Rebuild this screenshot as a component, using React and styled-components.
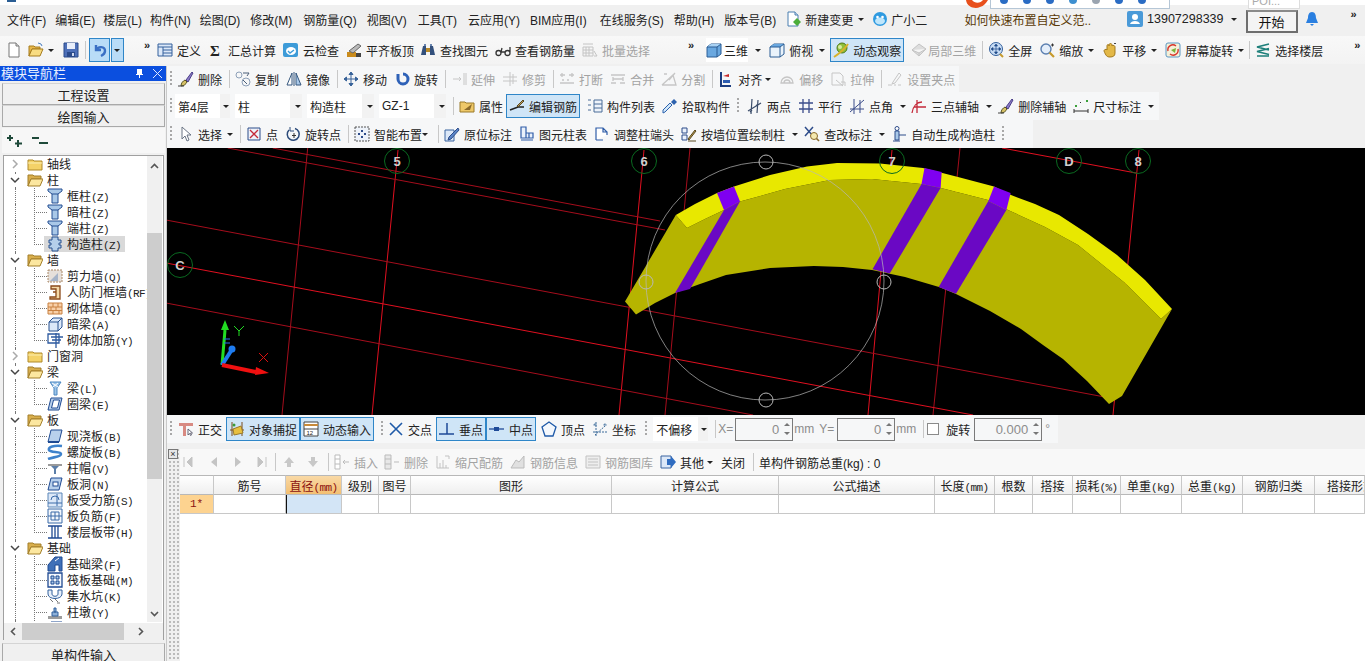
import styled, { createGlobalStyle } from "styled-components";

const GlobalStyle = createGlobalStyle`
  html, body {
    margin: 0;
    height: 100%;
    overflow: hidden;
    background: #f0f0f0;
  }
  * { box-sizing: border-box; }
`;

const UI_FONT = `"Liberation Sans", "Noto Sans CJK SC", sans-serif`;
const TREE_FONT = `"Noto Sans CJK SC", sans-serif`;

const icons = {
  new: <><path d="M3 1h7l3 3v11H3z" fill="#fff" stroke="#777" /><path d="M10 1v3h3" fill="#ddd" stroke="#777" /></>,
  change: <><path d="M2 1h7l3 3v11H2z" fill="#fff" stroke="#4a7fb0" /><path d="M9 1v3h3" fill="#cfe0f0" stroke="#4a7fb0" /><path d="M11 7l4 4-4 4-4-4z" fill="#4cae3a" /></>,
  robot: <><circle cx="8" cy="8" r="7" fill="#2f9ae0" /><ellipse cx="8" cy="10" rx="5" ry="3.500" fill="#bfe6fb" /><circle cx="5.500" cy="6" r="1.300" fill="#fff" /><circle cx="10.500" cy="6" r="1.300" fill="#fff" /></>,
  user: <><rect x="0" y="0" width="16" height="16" rx="2" fill="#4a9ad8" /><circle cx="8" cy="6" r="3" fill="#fff" /><path d="M3 13c1-4 9-4 10 0z" fill="#fff" /></>,
  open: <><path d="M1 4h5l1 1h5v2H4L1 14z" fill="#e8b84a" stroke="#a67c1e" /><path d="M4 7h11l-3 7H1z" fill="#f8dc82" stroke="#a67c1e" /><path d="M10 1l3 1 1 2" fill="none" stroke="#4a7fc0" /></>,
  save: <><path d="M1 1h14v14H1z" fill="#4d6fb8" stroke="#2b4a8a" /><path d="M4 1h8v6H4z" fill="#e8eefa" /><path d="M4 10h8v5H4z" fill="#2b4a8a" /><path d="M9 11h2v3H9z" fill="#cfd8ee" /></>,
  undo: <path d="M4 3v5h5M4 8c2-4 9-4 9 1 0 3-2 4-4 5" fill="none" stroke="#3a6fc4" strokeWidth="2.4" />,
  define: <><path d="M1 2h14v12H1z" fill="#dce8f8" stroke="#34609c" /><path d="M1 5h14M6 5v9M6 8h9M6 11h9" stroke="#34609c" /></>,
  sigma: <text x="2" y="14" fontSize="15" fontWeight="700" fontFamily="Liberation Serif, serif" fill="#222">Σ</text>,
  cloud: <><rect x="0" y="1" width="15" height="14" rx="2" fill="#3d9bd8" /><ellipse cx="8" cy="9" rx="5" ry="4" fill="#fff" /><path d="M5 9l2 2 4-3" fill="none" stroke="#3d9bd8" strokeWidth="1.4" /></>,
  level: <><path d="M1 10h9v5H1z" fill="#c98b1c" /><path d="M3 9l9-7 3 2-8 7z" fill="#b9b9b9" stroke="#666" /><path d="M10 11h5v4h-5z" fill="#444" /></>,
  binoc: <><path d="M1 13l2-9h3v9zM10 13V4h3l2 9z" fill="#33507c" /><path d="M6 6h4v4H6z" fill="#b88a2a" /><path d="M4 2h2v2H4zM10 2h2v2h-2z" fill="#6a86b0" /></>,
  glasses: <path d="M1 11a2.500 2.500 0 1 0 5 0 2.500 2.500 0 1 0-5 0M6 10l1-4M10 11a2.500 2.500 0 1 0 5 0 2.500 2.500 0 1 0-5 0M15 10V5M6 10h4" fill="none" stroke="#333" strokeWidth="1.300" />,
  batch: <path d="M1 2h10M1 5h10v9H1zM4 5v9M7 5v9M1 8h10M1 11h10M12 9l3 5h-3" fill="none" stroke="#c4c4c4" />,
  cube: <><path d="M1 5l4-3h10v10l-4 3H1z" fill="#6aa8e0" stroke="#2a5d94" /><path d="M1 5l4-3h10l-4 3z" fill="#a9d2f4" /><path d="M1 5h10v10M11 5l4-3" fill="none" stroke="#2a5d94" /></>,
  cubeTop: <><path d="M1 5l4-3h10v10l-4 3H1z" fill="#eaf3fb" stroke="#2a5d94" /><path d="M5 2h10l-4 3H1z" fill="#6aa8e0" /><path d="M1 5h10v10M11 5l4-3" fill="none" stroke="#2a5d94" /></>,
  orbit: <><circle cx="9" cy="6" r="5" fill="#8fbf3a" stroke="#4f7a1a" /><path d="M1 15C4 13 11 8 15 2" fill="none" stroke="#d9b22a" strokeWidth="2" /><circle cx="7" cy="5" r="2" fill="#d8eca0" /></>,
  local3d: <path d="M1 8l7-6 7 5-7 7z M1 8l7 3 7-4M8 11v3" fill="#ddd" stroke="#c4c4c4" />,
  full: <><circle cx="8" cy="7" r="6.500" fill="#c8dcf4" stroke="#33609c" /><path d="M8 3v8M4 7h8M8 2L6.500 4h3zM8 12l-1.500-2h3zM3 7l2-1.500v3zM13 7l-2-1.500v3z" fill="#1f4a8a" stroke="#1f4a8a" strokeWidth=".7" /><path d="M12 12l3 3" stroke="#c79a2c" strokeWidth="2" /></>,
  zoom: <><circle cx="7" cy="7" r="5" fill="#e4eefa" stroke="#5b7fb0" strokeWidth="1.400" /><path d="M10.500 10.500L15 15" stroke="#c79a2c" strokeWidth="2.200" /><path d="M12 3h3M13.500 1.500v3" stroke="#333" /></>,
  pan: <><path d="M2 9c0-2 3-2 3-1V4c0-2 2-2 2 0V3c0-2 3-2 3 0v1c0-1 3-1 3 1v6c0 3-2 4-5 4-3 0-4-1-6-6z" fill="#e3b847" stroke="#a37a1f" /><path d="M12 1l1 1 1-1" stroke="#444" fill="none" /></>,
  screen: <><rect x="1" y="1" width="14" height="14" rx="2" fill="#f5f0d8" stroke="#5a97c4" /><path d="M3 9a5 5 0 0 1 8-5" fill="none" stroke="#d8332a" strokeWidth="1.400" /><path d="M13 7a5 5 0 0 1-8 5" fill="none" stroke="#d8332a" strokeWidth="1.400" /><path d="M6 8l5-2-1 5z" fill="#7cb33a" /></>,
  layers: <path d="M14 2L2 5l12 3M14 6.500L2 9.500l12 3M2 14h12" fill="none" stroke="#1d7f7a" strokeWidth="1.600" />,
  brush: <><path d="M3 15c0-3 2-5 4-6l2 2c-1 2-3 4-6 4z" fill="#d8c266" stroke="#55511f" /><path d="M8 9l6-8 1 1-5 9z" fill="#8c7cc8" stroke="#4b3f88" /><path d="M0 15h6" stroke="#444" /></>,
  copy: <><circle cx="4" cy="4" r="3" fill="none" stroke="#8da0b8" /><circle cx="11" cy="11" r="4" fill="none" stroke="#8da0b8" /><path d="M8 2h6l-2 3M8 9l4 4" fill="none" stroke="#4a5e78" /></>,
  mirror: <><path d="M6 2v12H1z" fill="#fff" stroke="#35577e" /><path d="M10 2v12h5z" fill="#a9c8e8" stroke="#35577e" /><path d="M8 1v14" stroke="#35577e" /></>,
  move: <path d="M8 1v14M1 8h14M8 1L6 3.500h4zM8 15l-2-2.500h4zM1 8l2.500-2v4zM15 8l-2.500-2v4z" fill="#38639a" stroke="#38639a" />,
  rotate: <path d="M4 3v5a5 5 0 1 0 5-5" fill="none" stroke="#2f62b8" strokeWidth="3" />,
  extend: <path d="M2 8h8M13 2v12M15 2v12M8 6l2 2-2 2" fill="none" stroke="#c6c6c6" />,
  trim: <path d="M1 6h14M1 10h14M8 1v14M11 3v10" fill="none" stroke="#c6c6c6" />,
  breakIt: <path d="M1 4h5M10 4h5M1 12h14M3 2v4M13 2v4M3 9h2M8 9h2" fill="none" stroke="#c6c6c6" strokeWidth="1.300" />,
  merge: <path d="M1 4h14M1 12h5M10 12h5M3 8h10M3 6v4M13 6v4" fill="none" stroke="#c6c6c6" strokeWidth="1.300" />,
  split: <path d="M1 14h14L12 4 1 14M8 9l6-7M3 3h3" fill="none" stroke="#c6c6c6" strokeWidth="1.300" />,
  align: <><path d="M3 1v14h10" fill="none" stroke="#1c3d80" strokeWidth="2" /><path d="M5 5l6-2v3z" fill="#c82a2a" /><path d="M5 9h7v3H5z" fill="#2d5cb0" /></>,
  offset: <path d="M2 12a6 6 0 1 1 12 0zM5 12a3 3 0 1 1 6 0" fill="none" stroke="#c6c6c6" strokeWidth="1.300" />,
  stretch: <path d="M2 2h8l3 3v9H2zM6 9l7 6M11 11h4v4" fill="none" stroke="#c6c6c6" />,
  grips: <path d="M1 14h4M7 14h2M11 14h3M12 2L6 11l-1 2 3-1 6-8z" fill="none" stroke="#c6c6c6" />,
  prop: <><path d="M1 4h5l1 1h8v9H1z" fill="#eec869" stroke="#9a7a2a" /><path d="M5 12l8-6-2 6z" fill="#8a6a2a" /></>,
  editBar: <><path d="M1 12l8-3 6 0" fill="none" stroke="#222" strokeWidth="1.500" /><path d="M8 8l6-6 1 1-6 6z" fill="#b89a5c" stroke="#5a4a22" /></>,
  list: <path d="M1 2h3M1 7h3M1 12h3M7 2h8v12H7zM7 6h8M7 10h8" fill="#eef3fa" stroke="#4a6c98" />,
  pick: <><path d="M1 15l2-1 7-7-2-2-7 7z" fill="#d2e8fa" stroke="#2d62ae" /><path d="M9 4l3-3 3 3-3 3z" fill="#2d62ae" /></>,
  two: <path d="M1 13L14 5M5 1l-1 15M11 2l-1 13M3 14l2-2M9 8l2-2" fill="none" stroke="#3a4c6a" strokeWidth="1.200" />,
  parallel: <path d="M5 1v14M11 1v14M1 5h14M1 11h14" fill="none" stroke="#3a4c8a" strokeWidth="1.300" />,
  angle: <path d="M1 14L15 2M5 1v15M11 2v13M1 11h14" fill="none" stroke="#3a4c8a" />,
  three: <path d="M1 15C2 8 6 4 11 4M6 2v13M3 9h12" fill="none" stroke="#c42a3a" strokeWidth="1.300" />,
  dim: <><path d="M1 11v4M15 11v4M1 13h14" stroke="#333" fill="none" /><path d="M2 7h2v2H2zM13 2h2v2h-2z" fill="#3aa03a" /><path d="M7 4l1 1" stroke="#333" /></>,
  cursor: <path d="M4 1v12l3-3 2 5 2-1-2-5h4z" fill="#fff" stroke="#6a7484" />,
  point: <><path d="M2 2h12v12H2z" fill="#eef3fa" stroke="#2d4c8a" /><path d="M4 4l8 8M12 4l-8 8" stroke="#c42a3a" strokeWidth="1.300" /></>,
  rotPoint: <><path d="M4 4a6 6 0 1 0 6-1.500" fill="none" stroke="#2b4a7a" strokeWidth="1.500" /><path d="M5 1v4h4" fill="none" stroke="#2b4a7a" /><path d="M9 7v5M7 9.500h4" stroke="#333" /></>,
  smart: <><path d="M1 1h14v14H1z" fill="#eef3fa" stroke="#555" strokeDasharray="2 1" /><path d="M7 4h2v2H7zM4 7h2v2H4zM10 7h2v2h-2zM7 10h2v2H7z" fill="#2d4c8a" /></>,
  origin: <><path d="M1 4h9v11H1z" fill="#dce8f8" stroke="#3a64a0" /><path d="M5 11l9-9 1 2-8 9-3 1z" fill="#5b86c8" stroke="#2d4c8a" /></>,
  colTable: <path d="M2 1h5v11H2zM2 14h12M7 7h7v5H7zM10 7v5" fill="#eaf1fb" stroke="#2f5da8" strokeWidth="1.200" />,
  adjust: <path d="M2 14V2h7l4 4v3M2 14h7M9 2v4h4" fill="#fff" stroke="#2f5da8" strokeWidth="1.200" />,
  wallCol: <><path d="M1 2h5v5H1zM1 9h5v5H1z" fill="#eaf1fb" stroke="#2d4c8a" /><path d="M7 13l7-9 1 1-7 9zM7 15h8" fill="#b89a4c" stroke="#5a4a22" /></>,
  check: <><path d="M1 1l8 9M9 1L1 10" stroke="#2d4c8a" strokeWidth="1.500" /><circle cx="10" cy="10" r="3.500" fill="#f5e9b0" stroke="#8a6a2a" /><path d="M12.500 12.500L15 15" stroke="#8a6a2a" strokeWidth="1.600" /></>,
  auto: <><circle cx="6" cy="2.500" r="2" fill="#fff" stroke="#2d4c8a" /><path d="M4 5h4v9H4z" fill="#a9c8e8" stroke="#2d4c8a" /><path d="M2 15h7M8 9h7" stroke="#2d4c8a" /></>,
  ortho: <><path d="M1 2h14v3H1z" fill="#d88a82" /><path d="M5 5v10h3V5z" fill="#d88a82" /><path d="M10 8v6l1.500-1.500 1 2 1-.5-1-2h2z" fill="#fff" stroke="#667" /></>,
  snap: <><path d="M1 9h14M3 1v14M13 1v14" stroke="#7a4a1a" /><path d="M4 8l8-3 2 7-9 2z" fill="#e8c040" stroke="#9a7a2a" /><circle cx="5" cy="4" r="1.500" fill="#3a9a3a" /></>,
  dyn: <><path d="M1 1h14v14H1z" fill="#fff" stroke="#444" /><path d="M1 4h14" stroke="#c88a3a" strokeWidth="2" /><path d="M1 8h14" stroke="#444" /><text x="3.500" y="14" fontSize="6" fontFamily="Liberation Sans" fill="#222">12</text></>,
  cross: <path d="M2 2l12 12M14 2L2 14" fill="none" stroke="#1f5aa8" strokeWidth="1.600" />,
  perp: <path d="M0 13h15M8 2v11" stroke="#1f4a98" strokeWidth="1.500" />,
  mid: <><path d="M0 8h15" stroke="#1f4a98" strokeWidth="1.300" /><rect x="5" y="6" width="5" height="4" fill="#1f4a98" /></>,
  vertex: <path d="M8 1l7 5-3 9H4L1 6z" fill="#f4f8fd" stroke="#1f5aa8" strokeWidth="1.300" />,
  coord: <path d="M4 1v14M1 11h14M3 3a1 1 0 1 0 .1 0M13 3a1 1 0 1 0 .1 0M3 14l10-9" fill="none" stroke="#3a6a9a" strokeDasharray="2 1" />,
  first: <path d="M4 3v10M12 3v10L7 8z" fill="#c4c4c4" stroke="#c4c4c4" />,
  prev: <path d="M11 3v10L5 8z" fill="#c4c4c4" />,
  next: <path d="M5 3v10l6-5z" fill="#c4c4c4" />,
  last: <path d="M12 3v10M4 3v10l5-5z" fill="#c4c4c4" stroke="#c4c4c4" />,
  up: <path d="M8 3l5 6h-3v4H6V9H3z" fill="#c8c8c8" />,
  down: <path d="M8 13l5-6h-3V3H6v4H3z" fill="#c8c8c8" />,
  ins: <path d="M1 1h5v14H1zM1 5h5M1 10h5M9 8h6M11 6l-2 2 2 2" fill="#fff" stroke="#bbb" />,
  del: <path d="M1 1h6v14H1V1zM1 5h6M1 10h6M10 8h5" fill="#e8e8e8" stroke="#bbb" />,
  scale: <path d="M2 2v12h12M5 14V9M8 14V6M11 14v-3M10 2h4v3" fill="none" stroke="#c2c2c2" />,
  info: <path d="M1 14l5-8 3 2 5-6v12H1z" fill="#e0e0e0" stroke="#bbb" />,
  lib: <path d="M1 2h14v12H1zM3 5h10M3 8h10M3 11h10" fill="#eee" stroke="#c2c2c2" />,
  other: <><path d="M1 2h10v12H1z" fill="#dce8f8" stroke="#3a64a0" /><path d="M7 5h4V2l5 6-5 6v-3H7z" fill="#2f6cc0" /></>,
  folder: <><path d="M1 4h5l1 1h8v9H1z" fill="#f4d268" stroke="#b08a2a" /><path d="M1 7h14" stroke="#fbeeb0" /></>,
  folderOpen: <><path d="M1 3h5l1 1h7v3H4l-3 7z" fill="#d8ae4c" stroke="#a37f2a" /><path d="M4 7h12l-3 7H1z" fill="#fce7a0" stroke="#a37f2a" /></>,
  col: <><path d="M1 1h14v2l-4 3v9H5V6L1 3z" fill="#a9c8e8" stroke="#254f92" /><path d="M5 6h6" stroke="#254f92" /></>,
  conCol: <path d="M5 1h6v3h3v3h-2v2h2v3h-3v3H5v-3H2V9h2V7H2V4h3z" fill="#b5cfea" stroke="#27508f" />,
  shear: <><path d="M1 2h14v12H1z" fill="#e6e0da" stroke="#aa8866" strokeDasharray="2 1" /><path d="M3 13l8-8v8z" fill="#a6b4c8" /></>,
  door: <path d="M4 2h9v13H3v-2h6V5H4zM6 8h3" fill="#f4d9a8" stroke="#8a4a1a" strokeWidth="1.300" />,
  brick: <><path d="M1 3h14v11H1z" fill="#f8d0a8" stroke="#c88040" /><path d="M1 7h14M1 10.500h14M6 3v4M11 3v4M4 7v3.500M9 7v3.500M6 10.500V14M12 10.500V14" stroke="#c88040" /></>,
  beamH: <><path d="M2 6l4-4h9v9l-4 4H2z" fill="#dce8f8" stroke="#27508f" /><path d="M2 6h9v9M11 6l4-4" fill="none" stroke="#27508f" /></>,
  rebar: <path d="M1 2h11v9H1zM4 5h12M9 1v15M5 8h9" fill="none" stroke="#2d5aa0" strokeWidth="1.300" />,
  beam: <><path d="M3 2h11l-4 6v7H7V8z" fill="#9cc4e8" stroke="#4a86c0" /><path d="M5 3l6 4M11 3L6 7" stroke="#fff" /></>,
  ring: <path d="M1 14l3-12h11l-3 12zM4.500 12l2-8h6l-2 8z" fill="#b8d0ec" stroke="#1f4a92" fillRule="evenodd" />,
  slab: <><path d="M1 14l3-12h11l-3 12z" fill="#b8d0ec" stroke="#1f4a92" /><path d="M1 14h11" stroke="#1f4a92" strokeWidth="2" /></>,
  spiral: <path d="M15 2C7 1 1 3 2 6c1 3 12 1 12 4 0 3-8 3-13 5" fill="none" stroke="#3e82cc" strokeWidth="2.600" />,
  cap: <><path d="M1 4h14v2H1z" fill="#9a9a9a" /><path d="M4 6h8L9 9H7zM7 9h2v5H7z" fill="#5c7ea8" /></>,
  hole: <><path d="M1 14l3-12h11l-3 12z" fill="#b8d0ec" stroke="#1f4a92" /><rect x="6" y="6" width="5" height="4" fill="#fff" stroke="#1f4a92" /></>,
  sRebar: <><path d="M1 1h14v14H1z" fill="#dce8f8" stroke="#5a86b8" /><path d="M1 11h14M10 2v12M4 8a4 4 0 0 1 8 0" fill="none" stroke="#3a6aa8" /></>,
  nRebar: <><path d="M1 1h14v14H1z" fill="#f3f7fc" stroke="#3a6aa8" /><path d="M4 4h8v8H4zM1 8h14M8 4v8" fill="none" stroke="#3a6aa8" /></>,
  band: <path d="M1 2h14M1 14h14M5 2v12M11 2v12M8 2v12" fill="none" stroke="#1f4a92" strokeWidth="1.300" />,
  fBeam: <><path d="M1 15V9l7-8h7v14h-3V9H8v6z" fill="#3f70b8" stroke="#1f4a92" /><path d="M8 5l4-3" stroke="#fff" /></>,
  raft: <><path d="M1 1h14v14H1z" fill="#f3f7fc" stroke="#1f4a92" strokeWidth="1.300" /><path d="M4 4h3v3H4zM9 4h3v3H9zM4 9h3v3H4zM9 9h3v3H9z" fill="#a9c8e8" stroke="#1f4a92" /></>,
  pit: <><path d="M1 2h4v4c0 3 6 3 6 0V2h4v4c0 6-14 6-14 0z" fill="#e8f0fa" stroke="#33609c" /><path d="M3 11l3 3M8 11l3 3M10 15h3" stroke="#777" /></>,
  pier: <><path d="M1 12h14v3H1z" fill="#9c9c9c" /><path d="M5 8h6v4H5zM7 4h2v4H7z" fill="#8db0d8" stroke="#33609c" /></>,
};

const IconBox = styled.svg`
  width: 16px;
  height: 16px;
  flex: none;
  display: block;
`;

const Icon = ({ name }) => <IconBox viewBox="0 0 16 16">{icons[name]}</IconBox>;

const Page = styled.div`
  width: 1365px;
  height: 661px;
  overflow: hidden;
  position: relative;
  background: #f0f0f0;
  font-family: ${UI_FONT};
  font-size: 12px;
  color: #222;
`;

const TopStrip = styled.div`
  height: 5px;
  background: #fff;
`;

const AppMark = styled.div`
  position: absolute;
  left: 7px;
  top: 0;
  width: 9px;
  height: 2px;
  background: #2a5d94;
`;

const Swoosh = styled.svg`
  position: absolute;
  left: 965px;
  top: 0;
  width: 26px;
  height: 9px;
`;

const FloatBar = styled.div`
  position: absolute;
  left: 990px;
  top: 0;
  width: 180px;
  height: 9px;
  background: #fff;
  border: 1px solid #b5c6d6;
  border-top: none;
  display: flex;
  gap: 15px;
  padding-left: 9px;
`;

const FloatDot = styled.span`
  width: 8px;
  height: 4px;
  border-radius: 0 0 4px 4px;
  background: ${(p) => p.$c};
`;

const PoiBox = styled.div`
  position: absolute;
  left: 1248px;
  top: 0;
  width: 52px;
  height: 9px;
  background: #fff;
  border: 1px solid #ddd;
  border-top: none;
  color: #aaa;
  font-size: 11px;
  line-height: 3px;
  padding-left: 3px;
`;

const MenuBar = styled.div`
  height: 31px;
  padding: 0 0 3px 7px;
  display: flex;
  align-items: center;
  white-space: nowrap;
`;

const MenuItem = styled.span`
  margin-left: ${(p) => p.$ml ?? 10}px;
  font-size: ${(p) => p.$size ?? 12}px;
  color: ${(p) => p.$color ?? "#222"};
  flex: none;
  display: inline-flex;
  align-items: center;
  gap: 3px;
  &:first-child { margin-left: 0; }
`;

const StartButton = styled.button`
  width: 52px;
  height: 23px;
  margin-left: 8px;
  margin-top: 5px;
  padding: 0;
  flex: none;
  border: 2px solid #6e6e6e;
  border-top-color: #8a8a8a;
  background: #f4f4f4;
  font: 13px ${UI_FONT};
  color: #111;
`;

const Row = styled.div`
  height: ${(p) => p.$h}px;
  width: ${(p) => (p.$full ? "100%" : "fit-content")};
  display: flex;
  align-items: center;
  gap: 7px;
  padding: 0 ${(p) => p.$pr ?? 4}px 0 ${(p) => p.$pl ?? 3}px;
  background: ${(p) => p.$bg ?? "#f6f7f8"};
  white-space: nowrap;
  flex: none;
`;

const ToolWrap = styled.span`
  display: inline-flex;
  align-items: center;
  gap: ${(p) => p.$gap ?? 4}px;
  height: 24px;
  flex: none;
  margin-left: ${(p) => p.$ml ?? 0}px;
  padding: ${(p) => (p.$on ? "0 2px" : "0")};
  color: ${(p) => (p.$off ? "#a3a3a3" : "#222")};
  background: ${(p) => (p.$on ? "#cfe5f7" : p.$white ? "#fff" : "transparent")};
  border: ${(p) => (p.$on ? "1px solid #2f86c8" : "none")};
`;

const CaretMark = styled.span`
  width: 6px;
  height: 3px;
  flex: none;
  margin-left: ${(p) => p.$ml ?? 0}px;
  margin-right: 1px;
  border-left: 3px solid transparent;
  border-right: 3px solid transparent;
  border-top: 3px solid #222;
`;

const Sep = styled.span`
  width: 1px;
  height: 18px;
  flex: none;
  margin-left: ${(p) => p.$ml ?? 0}px;
  margin-right: -2px;
  background: #c8c8c8;
`;

const Grip = styled.span`
  width: 3px;
  height: 16px;
  flex: none;
  margin-left: ${(p) => p.$ml ?? 0}px;
  background: linear-gradient(#a8a8a8 50%, transparent 50%) 0 0 / 2px 4px repeat-y;
`;

const More = styled.span`
  width: 8px;
  height: 24px;
  flex: none;
  margin-left: ${(p) => p.$ml ?? 0}px;
  font: 700 11px/14px "Liberation Sans", sans-serif;
  color: #222;
`;

const UndoCaret = styled.span`
  width: 13px;
  height: 24px;
  flex: none;
  margin-left: ${(p) => p.$ml ?? 0}px;
  display: flex;
  align-items: center;
  justify-content: center;
  background: #b9dcf7;
  border: 1px solid #2f86c8;
`;

const UndoButton = styled(UndoCaret)`
  width: 21px;
`;

const SelectBox = styled.span`
  width: ${(p) => p.$w}px;
  height: 24px;
  flex: none;
  margin-left: ${(p) => p.$ml ?? 0}px;
  display: inline-flex;
  align-items: center;
  justify-content: space-between;
  padding: 0 0 0 3px;
  background: linear-gradient(90deg, #fff 82%, #f2f2f2 82%);
`;

const Items = ({ list }) =>
  list.map((it, i) => {
    if (it.sep) return <Sep key={i} $ml={it.ml} />;
    if (it.grip) return <Grip key={i} $ml={it.ml} />;
    if (it.caret) return <CaretMark key={i} $ml={it.ml} />;
    if (it.more) return <More key={i} $ml={it.ml}>»</More>;
    if (it.sel)
      return (
        <SelectBox key={i} $w={it.w} $ml={it.ml}>
          {it.sel}
          <CaretMark />
        </SelectBox>
      );
    if (it.undo)
      return (
        <UndoButton key={i} $ml={it.ml}>
          <Icon name="undo" />
        </UndoButton>
      );
    if (it.undoCaret)
      return (
        <UndoCaret key={i} $ml={it.ml}>
          <CaretMark />
        </UndoCaret>
      );
    return (
      <ToolWrap key={i} $ml={it.ml} $off={it.off} $on={it.on} $gap={it.gap} $white={it.white}>
        {it.i && <Icon name={it.i} />}
        {it.t}
      </ToolWrap>
    );
  });

const caret = (ml) => ({ caret: 1, ml });
const sep = (ml) => ({ sep: 1, ml });
const grip = (ml) => ({ grip: 1, ml });

const quickBar = [
  { i: "new" }, { i: "open", ml: -1 }, caret(-3), { i: "save", ml: 1 }, sep(-1),
  { undo: 1, ml: -2 }, { undoCaret: 1, ml: -6 }, { more: 1, ml: 13 },
  { i: "define", t: "定义", ml: -2 }, { i: "sigma", t: "汇总计算" }, { i: "cloud", t: "云检查" },
  { i: "level", t: "平齐板顶" }, { i: "binoc", t: "查找图元", ml: -1 }, { i: "glasses", t: "查看钢筋量" },
  { i: "batch", t: "批量选择", off: 1 }, { more: 1, ml: 31 },
  { i: "cube", t: "三维", gap: 2, white: 1, ml: 3 }, caret(), { i: "cubeTop", t: "俯视" }, caret(-1),
  { i: "orbit", t: "动态观察", on: 1, ml: -3 }, { i: "local3d", t: "局部三维", off: 1, gap: 1 }, sep(-1),
  { i: "full", t: "全屏" }, { i: "zoom", t: "缩放" }, caret(-2), { i: "pan", t: "平移" }, caret(-2),
  { i: "screen", t: "屏幕旋转" }, caret(-2), sep(-3), { i: "layers", t: "选择楼层" }, { more: 1, ml: 24 },
];

const editBar = [
  grip(), { i: "brush", t: "删除", ml: -2 }, sep(), { i: "copy", t: "复制" }, { i: "mirror", t: "镜像" }, sep(),
  { i: "move", t: "移动" }, { i: "rotate", t: "旋转" }, sep(), { i: "extend", t: "延伸", off: 1 },
  { i: "trim", t: "修剪", off: 1 }, sep(), { i: "breakIt", t: "打断", off: 1 }, { i: "merge", t: "合并", off: 1 },
  { i: "split", t: "分割", off: 1 }, sep(), { i: "align", t: "对齐" }, caret(-4), { i: "offset", t: "偏移", off: 1 },
  { i: "stretch", t: "拉伸", off: 1 }, sep(), { i: "grips", t: "设置夹点", off: 1 },
];

const compBar = [
  grip(), { sel: "第4层", w: 55, ml: -5 }, { sel: "柱", w: 67, ml: -2 }, { sel: "构造柱", w: 67, ml: -2 },
  { sel: "GZ-1", w: 67, ml: -2 }, sep(), { i: "prop", t: "属性" }, { i: "editBar", t: "编辑钢筋", on: 1, ml: -4 },
  { i: "list", t: "构件列表" }, { i: "pick", t: "拾取构件" }, grip(), { i: "two", t: "两点" },
  { i: "parallel", t: "平行" }, { i: "angle", t: "点角" }, caret(), { i: "three", t: "三点辅轴", ml: -3 }, caret(),
  { i: "brush", t: "删除辅轴", ml: -2 }, { i: "dim", t: "尺寸标注" }, caret(),
];

const drawBar = [
  grip(), { i: "cursor", t: "选择", ml: -2 }, caret(-2), sep(-1), { i: "point", t: "点" }, { i: "rotPoint", t: "旋转点" },
  sep(), { i: "smart", t: "智能布置" }, caret(-7), sep(2), { i: "origin", t: "原位标注" }, { i: "colTable", t: "图元柱表" },
  { i: "adjust", t: "调整柱端头" }, { i: "wallCol", t: "按墙位置绘制柱" }, caret(), { i: "check", t: "查改标注", ml: -2 },
  caret(), { i: "auto", t: "自动生成构造柱", ml: -2 }, grip(),
];

const snapBar = [
  grip(), { i: "ortho", t: "正交", ml: -2 }, { i: "snap", t: "对象捕捉", on: 1, ml: -3 }, { i: "dyn", t: "动态输入", on: 1, ml: -7 },
  grip(), { i: "cross", t: "交点", ml: -3 }, { i: "perp", t: "垂点", on: 1, ml: -3 }, { i: "mid", t: "中点", on: 1, ml: -7 },
  { i: "vertex", t: "顶点", ml: -2 }, { i: "coord", t: "坐标" }, grip(2), { sel: "不偏移", w: 55, ml: -2 }, sep(),
];

const rebarBar = [
  { i: "first", ml: 0 }, { i: "prev", ml: 3 }, { i: "next", ml: 1 }, { i: "last", ml: 1 }, sep(-2), { i: "up" }, { i: "down", ml: 1 }, sep(),
  { i: "ins", t: "插入", off: 1 }, { i: "del", t: "删除", off: 1, ml: -1 }, { i: "scale", t: "缩尺配筋", off: 1 },
  { i: "info", t: "钢筋信息", off: 1 }, { i: "lib", t: "钢筋图库", off: 1 }, { i: "other", t: "其他" }, caret(-4),
  { t: "关闭" }, sep(1), { t: "单构件钢筋总重(kg) : 0" },
];

const Muted = styled.span`
  color: #8c8c8c;
  flex: none;
  margin-left: ${(p) => p.$ml ?? 0}px;
`;

const SpinBox = styled.span`
  width: ${(p) => p.$w}px;
  height: 23px;
  flex: none;
  margin-left: ${(p) => p.$ml ?? 0}px;
  border: 1px solid #7a7a7a;
  display: flex;
  align-items: center;
  justify-content: flex-end;
  gap: 5px;
  padding-right: 2px;
  color: #8c8c8c;
  background: #f6f7f8;
  font-size: 13px;
`;

const SpinArrows = styled.span`
  display: flex;
  flex-direction: column;
  gap: 6px;
  &::before, &::after {
    content: "";
    width: 0;
    border-left: 3px solid transparent;
    border-right: 3px solid transparent;
  }
  &::before { border-bottom: 3px solid #777; }
  &::after { border-top: 3px solid #777; }
`;

const Check = styled.span`
  width: 12px;
  height: 12px;
  flex: none;
  margin-left: -2px;
  border: 1px solid #8a8a8a;
  background: #fff;
`;

const Body = styled.div`
  display: flex;
  height: 595px;
  margin-top: 2px;
`;

const LeftPanel = styled.aside`
  width: 167px;
  flex: none;
  display: flex;
  flex-direction: column;
  overflow: hidden;
  border-right: 1px solid #c9c9c9;
`;

const NavTitle = styled.div`
  height: 15px;
  flex: none;
  background: #0b4fdf;
  color: #e8efff;
  font-size: 13px;
  line-height: 14px;
  padding-left: 1px;
  display: flex;
  align-items: center;
  justify-content: space-between;
  padding-right: 4px;
`;

const TitleIcons = styled.span`
  display: flex;
  gap: 9px;
  align-items: center;
  font-size: 12px;
`;

const PanelButton = styled.div`
  height: 22px;
  flex: none;
  margin: ${(p) => p.$mt ?? 0}px 1px 0 2px;
  padding-top: 1px;
  border: 1px solid #a9a9a9;
  border-top-color: #d4d4d4;
  background: #f0f0f0;
  font: 13px/19px ${TREE_FONT};
  text-align: center;
`;

const TreeTools = styled.div`
  height: 25px;
  flex: none;
  margin: 1px 1px 0 2px;
  background: #f7f7f7;
  display: flex;
  align-items: center;
  gap: 8px;
  padding-left: 5px;
`;

const TreeBox = styled.div`
  height: 485px;
  flex: none;
  margin: 2px 2px 0 3px;
  border: 1px solid #a0a0a0;
  background: #fff;
  display: flex;
  flex-direction: column;
`;

const TreeMain = styled.div`
  height: 466px;
  flex: none;
  display: flex;
`;

const TreeList = styled.div`
  width: 143px;
  overflow: hidden;
  flex: none;
`;

const TreeRow = styled.div`
  height: 16px;
  position: relative;
  display: flex;
  align-items: center;
  white-space: nowrap;
  font: 12px/16px ${TREE_FONT};
  color: #222;
  &::before {
    content: "";
    position: absolute;
    left: 11px;
    top: 0;
    bottom: 0;
    border-left: 1px dotted #777;
  }
`;

const GroupRow = styled(TreeRow)`
  gap: 4px;
  &::before { display: ${(p) => (p.$first ? "none" : "block")}; }
`;

const ChildRow = styled(TreeRow)`
  padding-left: 40px;
  background: ${(p) =>
    p.$last ? "none" : "linear-gradient(#777 50%, transparent 50%) 30px 0 / 1px 2px repeat-y"};
  &::after {
    content: "";
    position: absolute;
    left: 30px;
    top: 0;
    width: 12px;
    height: 8px;
    border-left: 1px dotted #777;
    border-bottom: 1px dotted #777;
  }
`;

const ChildBody = styled.span`
  display: flex;
  align-items: center;
  gap: 4px;
  position: relative;
  z-index: 1;
  padding: 0 ${(p) => (p.$sel ? 4 : 0)}px 0 3px;
  background: ${(p) => (p.$sel ? "#d9d9d9" : "transparent")};
`;

const Chevron = styled.svg`
  width: 12px;
  height: 12px;
  margin-left: 5px;
  flex: none;
  position: relative;
  z-index: 1;
  background: #fff;
`;

const FolderGap = styled.span`
  margin-left: 2px;
  display: flex;
`;

const KeyHint = styled.span`
  font: 11px "Liberation Mono", monospace;
  letter-spacing: -0.6px;
`;

const VScroll = styled.div`
  width: 15px;
  flex: none;
  background: #f0f0f0;
  display: flex;
  flex-direction: column;
  align-items: center;
  justify-content: space-between;
  padding: 6px 0 4px;
  position: relative;
`;

const VThumb = styled.div`
  position: absolute;
  left: 0;
  right: 0;
  top: 77px;
  height: 246px;
  background: #cdcdcd;
`;

const HScroll = styled.div`
  height: 17px;
  flex: none;
  margin-top: 1px;
  background: #f0f0f0;
  display: flex;
  align-items: center;
  justify-content: space-between;
  padding: 0 18px 0 5px;
  position: relative;
`;

const HThumb = styled.div`
  position: absolute;
  left: 18px;
  top: 0;
  bottom: 0;
  width: 102px;
  background: #cdcdcd;
`;

const ArrowMark = styled.svg`
  width: 9px;
  height: 9px;
  position: relative;
`;

const Arrow = ({ d }) => (
  <ArrowMark viewBox="0 0 9 9">
    <path d={d} fill="none" stroke="#555" strokeWidth="1.600" />
  </ArrowMark>
);

const RightPanel = styled.main`
  flex: 1;
  min-width: 0;
  display: flex;
  flex-direction: column;
`;

const CanvasSvg = styled.svg`
  display: block;
  width: 1198px;
  height: 267px;
  flex: none;
  background: #000;
`;

const Lower = styled.div`
  margin-top: 6px;
  flex: 1;
  display: flex;
  min-height: 0;
`;

const DockGrip = styled.div`
  width: 13px;
  flex: none;
  background:
    radial-gradient(#bbb 1px, transparent 1.200px) 1px 11px / 4px 4px repeat;
  position: relative;
`;

const DockClose = styled.span`
  position: absolute;
  left: 1px;
  top: 0;
  width: 10px;
  height: 10px;
  background: #e6e6e6;
  border: 1px solid #777;
  font: 9px/8px "Liberation Sans", sans-serif;
  text-align: center;
  color: #333;
`;

const Sheet = styled.div`
  flex: 1;
  min-width: 0;
  background: #fff;
`;

const TableGrid = styled.div`
  display: grid;
  grid-template-columns: 34px 72px 56px 37px 32px 201px 167px 156px 60px 38px 40px 48px 61px 61px 72px 50px;
  width: 1185px;
  overflow: hidden;
`;

const HeadCell = styled.div`
  height: 20px;
  border-top: 1px solid #b8b8b8;
  border-right: 1px solid #c8c8c8;
  border-bottom: 1px solid #b8b8b8;
  background: ${(p) => (p.$sel ? "linear-gradient(#f9d9a6, #f3bf72)" : "linear-gradient(#fff, #efefef)")};
  color: ${(p) => (p.$sel ? "#8a1010" : "#222")};
  font: 12px/19px ${TREE_FONT};
  text-align: ${(p) => (p.$pl ? "left" : "center")};
  white-space: nowrap;
  overflow: hidden;
  padding-left: ${(p) => p.$pl ?? 0}px;
`;

const RowHead = styled.div`
  height: 19px;
  background: #fdd390;
  border-bottom: 1px solid #c8c8c8;
  border-right: 1px solid #c8c8c8;
  color: #8a1010;
  font: 11px/18px "Liberation Mono", monospace;
  text-align: center;
`;

const DataCell = styled.div`
  height: 19px;
  border-bottom: 1px solid #c8c8c8;
  border-right: 1px solid #c8c8c8;
  background: ${(p) => (p.$sel ? "#d3e5f6" : "#fff")};
  border-left: ${(p) => (p.$sel ? "1px solid #111" : "none")};
`;

const menus = [
  ["文件(F)"], ["编辑(E)", 9], ["楼层(L)", 8], ["构件(N)", 8], ["绘图(D)", 9], ["修改(M)", 10], ["钢筋量(Q)", 11],
  ["视图(V)", 10], ["工具(T)", 11], ["云应用(Y)", 11], ["BIM应用(I)", 10], ["在线服务(S)", 13], ["帮助(H)", 10], ["版本号(B)", 10],
];

const columns = [
  ["筋号"], ["直径", "(mm)", 1], ["级别"], ["图号"], ["图形"], ["计算公式"], ["公式描述"], ["长度", "(mm)"],
  ["根数"], ["搭接"], ["损耗", "(%)"], ["单重", "(kg)"], ["总重", "(kg)"], ["钢筋归类"],
];

const tree = [
  { name: "轴线", closed: 1 },
  { name: "柱", items: [["col", "框柱", "(Z)"], ["col", "暗柱", "(Z)"], ["col", "端柱", "(Z)"], ["conCol", "构造柱", "(Z)", 1]] },
  { name: "墙", items: [["shear", "剪力墙", "(Q)"], ["door", "人防门框墙", "(RF)"], ["brick", "砌体墙", "(Q)"], ["beamH", "暗梁", "(A)"], ["rebar", "砌体加筋", "(Y)"]] },
  { name: "门窗洞", closed: 1 },
  { name: "梁", items: [["beam", "梁", "(L)"], ["ring", "圈梁", "(E)"]] },
  { name: "板", items: [["slab", "现浇板", "(B)"], ["spiral", "螺旋板", "(B)"], ["cap", "柱帽", "(V)"], ["hole", "板洞", "(N)"], ["sRebar", "板受力筋", "(S)"], ["nRebar", "板负筋", "(F)"], ["band", "楼层板带", "(H)"]] },
  { name: "基础", items: [["fBeam", "基础梁", "(F)"], ["raft", "筏板基础", "(M)"], ["pit", "集水坑", "(K)"], ["pier", "柱墩", "(Y)"], ["slab", "独立基础", "(D)"]] },
];

const NavTree = () =>
  tree.map((g, gi) => (
    <div key={g.name}>
      <GroupRow $first={gi === 0}>
        <Chevron viewBox="0 0 12 12">
          <path d={g.closed ? "M4 2l4 4-4 4" : "M2 4l4 4 4-4"} fill="none" stroke={g.closed ? "#aaa" : "#444"} strokeWidth="1.500" />
        </Chevron>
        <FolderGap><Icon name={g.closed ? "folder" : "folderOpen"} /></FolderGap>
        {g.name}
      </GroupRow>
      {g.items?.map(([ic, label, key, sel], i) => (
        <ChildRow key={label} $last={i === g.items.length - 1}>
          <ChildBody $sel={sel}>
            <Icon name={ic} />
            <span>{label}<KeyHint>{key}</KeyHint></span>
          </ChildBody>
        </ChildRow>
      ))}
    </div>
  ));

const Axis = styled.g`
  font: 700 13px "Liberation Sans", sans-serif;
`;

const gridLines = [
  [307.7, 148, 282, 415, 0], [398, 150, 372, 415, 1], [690, 148, 665, 415, 0], [644, 150, 619, 415, 1],
  [960, 148, 933, 415, 0], [892, 150, 868, 415, 1], [1139, 150, 1113, 415, 1],
  [272.7, 148, 660, 221, 0], [227.7, 148, 665, 230, 0], [1002, 148, 1136, 173, 1],
  [166, 220, 1110, 398, 0], [166, 263, 973, 415, 1], [166, 303, 753, 415, 0],
];

const axisMarks = [[397, 161, "5"], [644, 161, "6"], [892, 161, "7"], [1069, 161, "D"], [1138, 161, "8"], [180, 265, "C"]];

const bandInner = "687,228 705,219 724,210 740,201.600 785,189 830,180 872,179 921,184 941,188 988,200 1008,210 1045,227 1078,245 1125,283 1161,319";
const bandOuter = "1172,309 1145,280 1117,255 1088,234 1059,215 1035,204 1011,195 994,186.500 958,177 923,168 880,163.500 837,163 807,166.500 770,175 734,186.500 717,193 695,204 675.800,215";
const archInner = "1109,404 1087,381 1063,359 1043,345 1021,329 990,311 956,294 939,287 905,277 872,270 843,267 814,266 770,268 726,275 700,284 675,293 655,303 636,314.500 625,301.500";

const DrawingCanvas = () => (
  <CanvasSvg viewBox="167 148 1198 267">
    {gridLines.map(([a, b, c, d, hot], i) => (
      <line key={i} x1={a} y1={b} x2={c} y2={d} stroke={hot ? "#e01020" : "#a50d1c"} />
    ))}
    <polygon fill="#b6b400" points={`675.800,215 ${bandInner} 1172,309 1122,396 ${archInner}`} />
    <polygon fill="#e8e800" points={`${bandOuter} ${bandInner}`} />
    <polygon fill="#7f00f0" points="717,193 734,186.500 740,201.600 724,210" />
    <polygon fill="#6a08c4" points="724,210 740,201.600 690,289 675,293" />
    <polygon fill="#7f00f0" points="924.500,168 941.700,172 940.600,188 921.500,184" />
    <polygon fill="#6a08c4" points="921.500,184 940.600,188 889.700,273.600 872.500,269.300" />
    <polygon fill="#7f00f0" points="994,186.500 1010.600,193 1006.400,210 988.400,201" />
    <polygon fill="#6a08c4" points="988.400,201 1006.400,210 956,293.700 938.700,287" />
    <circle cx="765" cy="281" r="119" fill="none" stroke="#b8b8b8" strokeOpacity=".7" />
    {[[766, 162], [766, 400], [646, 282], [884, 282]].map(([x, y]) => (
      <circle key={x + y} cx={x} cy={y} r="7" fill="none" stroke="#b8b8b8" />
    ))}
    <Axis>
      {axisMarks.map(([x, y, t]) => (
        <g key={t}>
          <circle cx={x} cy={y} r="12.500" fill="none" stroke="#0a6a20" />
          <text x={x} y={y + 5} textAnchor="middle" fill="#cfcfcf">{t}</text>
        </g>
      ))}
    </Axis>
    <path d="M222 365L225 330" stroke="#22dd22" strokeWidth="3" />
    <path d="M225 320l4 10h-8z" fill="#22dd22" />
    <path d="M222 365l9-14" stroke="#1e7cf0" strokeWidth="4" />
    <circle cx="232" cy="349" r="3.500" fill="#1e7cf0" />
    <path d="M222 365l34 7" stroke="#f01010" strokeWidth="4" />
    <path d="M256 367l13 6-14 2z" fill="#f01010" />
    <path d="M234 326l5 5 5-5M239 331v5" fill="none" stroke="#22dd22" />
    <path d="M224 339h6M224 343h6" stroke="#2d6ff0" />
    <path d="M259 353l9 9M268 353l-9 9" stroke="#d81010" />
  </CanvasSvg>
);

export default function App() {
  return (
    <Page>
      <GlobalStyle />
      <TopStrip />
      <AppMark />
      <Swoosh viewBox="0 0 26 9">
        <path d="M1 0c1 8 10 9 14 7 4-1 6-4 8-7h-5c-2 3-8 4-11 0z" fill="#e8501c" />
      </Swoosh>
      <FloatBar>
        <FloatDot $c="#2a6cc4" />
        <FloatDot $c="#2a6cc4" />
        <FloatDot $c="#2a6cc4" />
        <FloatDot $c="#3d8fd0" />
        <FloatDot $c="#9aa4b0" />
        <FloatDot $c="#2a6cc4" />
        <FloatDot $c="#2a6cc4" />
      </FloatBar>
      <PoiBox>POI...</PoiBox>
      <MenuBar>
        {menus.map(([m, ml]) => (
          <MenuItem key={m} $ml={ml}>{m}</MenuItem>
        ))}
        <MenuItem><Icon name="change" /> 新建变更</MenuItem>
        <CaretMark $ml={5} />
        <MenuItem $ml={7}><Icon name="robot" /> 广小二</MenuItem>
        <MenuItem $ml={37} $color="#5a3a08">如何快速布置自定义范..</MenuItem>
        <MenuItem $ml={36}><Icon name="user" /></MenuItem>
        <MenuItem $ml={4} $size={12.500}>13907298339</MenuItem>
        <CaretMark $ml={7} />
        <StartButton>开始</StartButton>
        <MenuItem $ml={6}>
          <IconBox viewBox="0 0 16 16">
            <path d="M8 1c3 0 4 3 4 6l2 5H2l2-5c0-3 1-6 4-6zM6 13h4l-2 2z" fill="#2a7fe0" />
          </IconBox>
        </MenuItem>
        <More $ml={31}>»</More>
      </MenuBar>
      <Row $h={28} $full $pl={6} $bg="linear-gradient(#f8f8f8, #f3f3f3)"><Items list={quickBar} /></Row>
      <Body>
        <LeftPanel>
          <NavTitle>
            模块导航栏
            <TitleIcons>
              <svg width="9" height="11" viewBox="0 0 9 11"><path d="M2 1h5v5h1v1H5v3H4V7H1V6h1z" fill="#fff" /></svg>
              <svg width="9" height="9" viewBox="0 0 9 9"><path d="M0 0l9 9M9 0L0 9" stroke="#dfe8ff" /></svg>
            </TitleIcons>
          </NavTitle>
          <PanelButton $mt={2}>工程设置</PanelButton>
          <PanelButton>绘图输入</PanelButton>
          <TreeTools>
            <svg width="17" height="14" viewBox="0 0 17 14"><path d="M3 1v6M0 4h6M11 6v7M8 9.500h7" stroke="#1f4a3a" strokeWidth="2" /></svg>
            <svg width="17" height="14" viewBox="0 0 17 14"><path d="M0 4h7M7 9h9" stroke="#1f4a3a" strokeWidth="2" /></svg>
          </TreeTools>
          <TreeBox>
            <TreeMain>
              <TreeList><NavTree /></TreeList>
              <VScroll>
                <VThumb />
                <Arrow d="M1 6l3.500-3.500L8 6" />
                <Arrow d="M1 3l3.500 3.500L8 3" />
              </VScroll>
            </TreeMain>
            <HScroll>
              <HThumb />
              <Arrow d="M6 1L2.500 4.500 6 8" />
              <Arrow d="M3 1l3.500 3.500L3 8" />
            </HScroll>
          </TreeBox>
          <PanelButton $mt={3}>单构件输入</PanelButton>
        </LeftPanel>
        <RightPanel>
          <Row $h={26}><Items list={editBar} /></Row>
          <Row $h={28}><Items list={compBar} /></Row>
          <Row $h={28} $pr={28}><Items list={drawBar} /></Row>
          <DrawingCanvas />
          <Row $h={28} $pr={8}>
            <Items list={snapBar} />
            <Muted $ml={-3}>X=</Muted>
            <SpinBox $w={58} $ml={-5}>0<SpinArrows /></SpinBox>
            <Muted $ml={-6}>mm</Muted>
            <Muted $ml={-2}>Y=</Muted>
            <SpinBox $w={58} $ml={-4}>0<SpinArrows /></SpinBox>
            <Muted $ml={-6}>mm</Muted>
            <Sep />
            <Check />
            <span>旋转</span>
            <SpinBox $w={68} $ml={-3}>0.000<SpinArrows /></SpinBox>
            <Muted $ml={-4}>°</Muted>
          </Row>
          <Lower>
            <DockGrip><DockClose>×</DockClose></DockGrip>
            <Sheet>
              <Row $h={26} $full $pl={0} $bg="#f8f8f8"><Items list={rebarBar} /></Row>
              <TableGrid>
                <HeadCell />
                {columns.map(([label, unit, sel]) => (
                  <HeadCell key={label} $sel={sel}>{label}{unit && <KeyHint>{unit}</KeyHint>}</HeadCell>
                ))}
                <HeadCell $pl={12}>搭接形式</HeadCell>
                <RowHead>1*</RowHead>
                {columns.map(([label, , sel]) => <DataCell key={label} $sel={sel} />)}
                <DataCell />
              </TableGrid>
            </Sheet>
          </Lower>
        </RightPanel>
      </Body>
    </Page>
  );
}
